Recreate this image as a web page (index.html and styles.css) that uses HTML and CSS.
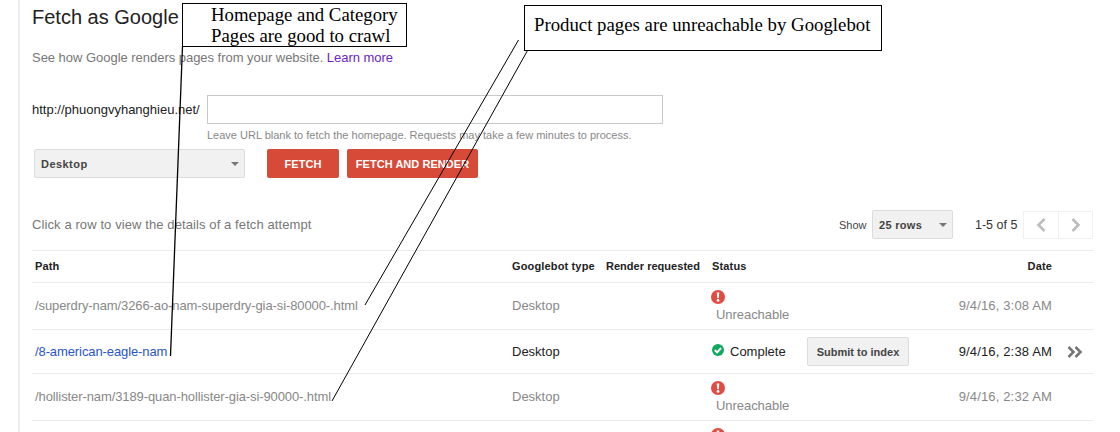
FILE: index.html
```html
<!DOCTYPE html>
<html lang="en">
<head>
<meta charset="utf-8">
<title>Fetch as Google</title>
<link rel="stylesheet" href="styles.css">
</head>
<body>
<main class="page">
  <h1 class="title">Fetch as Google</h1>
  <p class="intro">See how Google renders pages from your website. <a class="learn" href="#">Learn more</a></p>
  <div class="url-row">
    <span class="domain">http://phuongvyhanghieu.net/</span>
    <div class="url-field">
      <div class="url-input"></div>
      <p class="hint">Leave URL blank to fetch the homepage. Requests may take a few minutes to process.</p>
    </div>
  </div>
  <div class="action-row">
    <div class="select select-device"><span>Desktop</span><i class="caret"></i></div>
    <button class="btn btn-fetch">FETCH</button>
    <button class="btn btn-render">FETCH AND RENDER</button>
  </div>
  <div class="toolbar">
    <span class="click-hint">Click a row to view the details of a fetch attempt</span>
    <span class="show">Show</span>
    <div class="select select-rows"><span>25 rows</span><i class="caret"></i></div>
    <span class="count">1-5 of 5</span>
    <div class="pager">
      <span class="pager-btn"><svg width="12" height="16" viewBox="0 0 12 16"><path d="M9.5 2 3.5 8l6 6" fill="none" stroke="#bdbdbd" stroke-width="2.6"/></svg></span>
      <span class="pager-btn"><svg width="12" height="16" viewBox="0 0 12 16"><path d="M2.5 2l6 6-6 6" fill="none" stroke="#bdbdbd" stroke-width="2.6"/></svg></span>
    </div>
  </div>
  <table class="fetches">
    <colgroup><col class="c-path"><col class="c-type"><col class="c-render"><col class="c-status"><col class="c-date"><col class="c-more"></colgroup>
    <thead>
      <tr class="head"><th>Path</th><th>Googlebot type</th><th class="th-render">Render requested</th><th>Status</th><th class="right">Date</th><th></th></tr>
    </thead>
    <tbody>
      <tr class="row muted tall">
        <td>/superdry-nam/3266-ao-nam-superdry-gia-si-80000-.html</td><td>Desktop</td><td></td>
        <td class="status"><svg class="ico-err" width="14" height="14" viewBox="0 0 14 14"><circle cx="7" cy="7" r="7" fill="#e34b42"/><path d="M5.7 2.6h2.6L7.8 8.300H6.200z" fill="#fff"/><circle cx="7" cy="10.400" r="1.400" fill="#fff"/></svg><span class="err-text">Unreachable</span></td>
        <td class="right">9/4/16, 3:08 AM</td><td></td>
      </tr>
      <tr class="row ok">
        <td><a class="path-link" href="#">/8-american-eagle-nam</a></td><td>Desktop</td><td></td>
        <td class="status"><div class="ok-cell"><svg class="ico-ok" width="12" height="12" viewBox="0 0 12 12"><circle cx="6" cy="6" r="6" fill="#12a861"/><path d="M2.800 6l2.300 2.300 4-4.300" fill="none" stroke="#fff" stroke-width="1.900"/></svg><span class="ok-text">Complete</span><button class="submit">Submit to index</button></div></td>
        <td class="right">9/4/16, 2:38 AM</td>
        <td class="more"><svg width="16" height="12" viewBox="0 0 16 12"><path d="M1.500 1l5 5-5 5M8.500 1l5 5-5 5" fill="none" stroke="#757575" stroke-width="2.500"/></svg></td>
      </tr>
      <tr class="row muted tall">
        <td>/hollister-nam/3189-quan-hollister-gia-si-90000-.html</td><td>Desktop</td><td></td>
        <td class="status"><svg class="ico-err" width="14" height="14" viewBox="0 0 14 14"><circle cx="7" cy="7" r="7" fill="#e34b42"/><path d="M5.7 2.6h2.6L7.8 8.300H6.200z" fill="#fff"/><circle cx="7" cy="10.400" r="1.400" fill="#fff"/></svg><span class="err-text">Unreachable</span></td>
        <td class="right">9/4/16, 2:32 AM</td><td></td>
      </tr>
      <tr class="row muted tall">
        <td></td><td></td><td></td>
        <td class="status status-top"><svg class="ico-err" width="14" height="14" viewBox="0 0 14 14"><circle cx="7" cy="7" r="7" fill="#e34b42"/><path d="M5.7 2.6h2.6L7.8 8.300H6.200z" fill="#fff"/><circle cx="7" cy="10.400" r="1.400" fill="#fff"/></svg></td>
        <td></td><td></td>
      </tr>
    </tbody>
  </table>
</main>
<svg class="callout-lines" width="1120" height="432" viewBox="0 0 1120 432">
  <path d="M183 27v13" stroke="#000" stroke-width="2" fill="none"/>
  <path d="M182.500 46 170.500 356" stroke="#000" stroke-width="1.300" fill="none"/>
  <path d="M518.500 40 365 305" stroke="#000" fill="none"/>
  <path d="M530 46 332 401" stroke="#000" fill="none"/>
</svg>
<div class="callout callout-home">Homepage and Category<br>Pages are good to crawl</div>
<div class="callout callout-product">Product pages are unreachable by Googlebot</div>
</body>
</html>
```
FILE: styles.css
```css
* { box-sizing: border-box; }
html, body { margin: 0; height: 432px; overflow: hidden; background: #fff; }
body { font-family: "Liberation Sans", Arial, sans-serif; color: #222; position: relative; }
.page { margin-left: 18px; border-left: 2px solid #eee; padding-left: 12px; width: 1075px; height: 432px; overflow: hidden; }
.title { margin: 0; font-size: 20px; font-weight: 400; line-height: 34px; color: #222; }
.intro { margin: 15px 0 0; font-size: 13px; line-height: 18px; color: #777; letter-spacing: -0.03px; }
.learn { color: #6a1fc4; text-decoration: none; }
.url-row { display: flex; margin-top: 28px; }
.domain { width: 175px; font-size: 13px; line-height: 29px; color: #222; }
.url-field { width: 456px; }
.url-input { height: 29px; border: 1px solid #c9c9c9; background: #fff; }
.hint { margin: 4px 0 0; font-size: 11px; line-height: 14px; color: #888; white-space: nowrap; }
.action-row { display: flex; margin-top: 7px; padding-left: 2px; }
.select { display: flex; align-items: center; justify-content: space-between; height: 29px; background: #f1f1f1; border: 1px solid #dcdcdc; border-radius: 2px; font-size: 11px; font-weight: 700; color: #444; }
.select-device { width: 211px; padding: 0 5px 0 6px; letter-spacing: 0.45px; }
.caret { width: 0; height: 0; border-left: 4px solid transparent; border-right: 4px solid transparent; border-top: 4px solid #777; }
.btn { height: 29px; padding: 0; border: 0; border-radius: 2px; background: #d84a38; color: #fff; font: 700 11px "Liberation Sans", Arial, sans-serif; }
.btn-fetch { width: 72px; margin-left: 22px; letter-spacing: 0.1px; }
.btn-render { width: 131px; margin-left: 8px; letter-spacing: 0.05px; }
.toolbar { display: flex; align-items: center; height: 29px; margin-top: 32px; }
.click-hint { width: 807px; font-size: 13px; line-height: 29px; color: #777; letter-spacing: 0.1px; white-space: nowrap; }
.show { width: 33px; font-size: 11px; color: #444; }
.select-rows { width: 81px; padding: 0 5px 0 6px; letter-spacing: 0.3px; }
.count { width: 48px; margin-left: 22px; font-size: 12.500px; color: #333; white-space: nowrap; }
.pager { display: flex; height: 28px; border: 1px solid #f0f0f0; }
.pager-btn { display: flex; align-items: center; justify-content: center; width: 34px; }
.pager-btn + .pager-btn { border-left: 1px solid #f0f0f0; }
.fetches { table-layout: fixed; width: 1061px; margin-top: 11px; border-collapse: collapse; }
.c-path { width: 477px; }
.c-type { width: 97px; }
.c-render { width: 106px; }
.c-status { width: 230px; }
.c-date { width: 110px; }
.c-more { width: 41px; }
.fetches tr { border-top: 1px solid #ebebeb; border-bottom: 1px solid #ebebeb; }
.fetches th, .fetches td { padding: 0 0 0 3px; text-align: left; white-space: nowrap; }
.head { height: 32px; }
.fetches th { padding-bottom: 2px; font-size: 11px; font-weight: 700; color: #222; letter-spacing: 0.15px; }
.fetches .th-render { padding-left: 0; letter-spacing: 0.03px; }
.fetches th:nth-child(4), .fetches td:nth-child(4) { padding-left: 0; }
.fetches .right { text-align: right; padding-left: 0; }
.row { height: 44px; font-size: 13px; color: #222; }
.row.tall { height: 47px; }
.row.muted { color: #888; }
.row.tall td { padding-bottom: 2px; }
.fetches tbody td:first-child { padding-left: 3px; letter-spacing: -0.1px; }
.fetches tbody td:nth-child(5) { letter-spacing: 0.15px; }
.path-link { color: #2a56c6; text-decoration: none; }
.status { vertical-align: middle; }
.row.tall .status { padding-bottom: 0; }
.row.tall .status-top { vertical-align: top; padding-top: 7px; }
.ico-err { display: block; margin-left: -1px; }
.err-text { display: block; margin: 4px 0 0 4px; font-size: 13px; line-height: 14px; color: #888; letter-spacing: -0.05px; }
.ok-cell { display: flex; align-items: center; }
.ico-ok { margin-top: -3px; }
.ok-text { width: 77px; margin-left: 6px; color: #222; }
.submit { width: 102px; height: 29px; padding: 0; background: #f1f1f1; border: 1px solid #dcdcdc; border-radius: 2px; font: 700 11px "Liberation Sans", Arial, sans-serif; color: #444; }
.more { padding-left: 15px !important; }
.more svg { display: block; }
.callout-lines { position: absolute; left: 0; top: 0; pointer-events: none; }
.callout { position: absolute; background: #fff; border: 1px solid #000; font-family: "Liberation Serif", "Times New Roman", serif; font-size: 18.800px; color: #000; white-space: nowrap; }
.callout-home { left: 182px; top: 3px; width: 225px; height: 44px; padding: 0 0 0 28px; line-height: 21px; }
.callout-product { left: 524px; top: 5px; width: 358px; height: 46px; padding: 0 0 0 9px; line-height: 37px; }
```
